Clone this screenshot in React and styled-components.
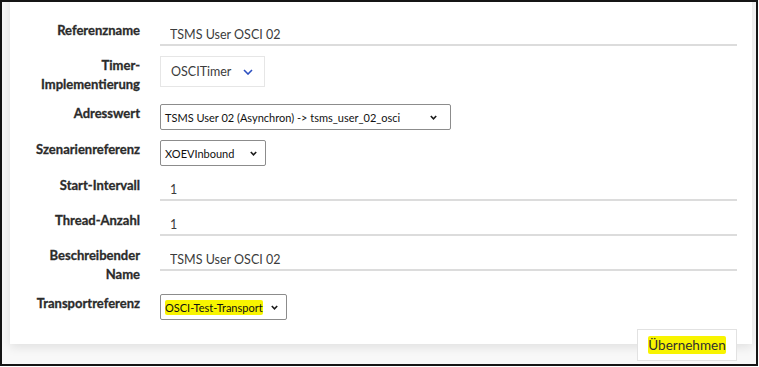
import React from 'react';
import styled, {createGlobalStyle} from 'styled-components';

const GlobalStyle = createGlobalStyle`
    body {
        margin: 0;
        background: #fff;
        font-family: Lato, "Open Sans", sans-serif;
    }
`;

const Frame = styled.div`
    width: 758px;
    height: 366px;
    box-sizing: border-box;
    border: 2px solid #151515;
    background: #f8f8f8;
    overflow: hidden;
`;

const Card = styled.div`
    margin: -20px 4px 0 8px;
    padding: 39px 15px 24px 0;
    background: #fff;
    box-shadow: 0 3px 10px rgba(0, 0, 0, 0.1);
`;

const Form = styled.div`
    display: grid;
    grid-template-columns: 130px 1fr;
    column-gap: 20px;
    row-gap: 10px;
    align-items: start;
`;

const Label = styled.label`
    text-align: right;
    font-weight: 700;
    font-size: 13px;
    line-height: 19px;
    color: #2b2b2b;
    -webkit-text-stroke: 0.3px #2b2b2b;
`;

const TextInput = styled.input`
    display: block;
    width: 100%;
    height: 25px;
    box-sizing: border-box;
    padding: 3px 10px 0;
    border: none;
    border-bottom: 2px solid #dcdcdc;
    background: transparent;
    font-family: Lato, sans-serif;
    font-size: 12.5px;
    color: #3c3c3c;
    outline: none;
`;

const Dropdown = styled.div`
    display: inline-flex;
    align-items: center;
    gap: 12px;
    height: 31px;
    box-sizing: border-box;
    padding: 0 11px 0 10px;
    border: 1px solid #e6e6e6;
    background: #fff;
    font-size: 12.5px;
    color: #3c3c3c;
`;

const SelectBox = styled.div`
    display: flex;
    align-items: center;
    justify-content: space-between;
    width: ${p => p.$width}px;
    height: 26px;
    box-sizing: border-box;
    padding: 0 ${p => p.$arrowGap}px 0 4px;
    border: 1px solid #8c8c8c;
    border-radius: 2px;
    background: #fff;
    font-size: 11px;
    color: #111;
`;

const Marker = styled.span`
    background: #f8f400;
    border-radius: 2px;
    padding: 1px 0;
`;

const Footer = styled.div`
    display: flex;
    justify-content: flex-end;
    margin-top: -15px;
    padding-right: 19px;
`;

const Button = styled.button`
    width: 100px;
    height: 32px;
    border: 1px solid #e2e2e2;
    background: #fff;
    font-family: Lato, sans-serif;
    font-size: 13.5px;
    color: #2f2f2f;
    padding: 0;
`;

const BlueChevron = () => (
    <svg width="10" height="6" viewBox="0 0 10 6">
        <polyline points="1,1 5,5 9,1" fill="none" stroke="#2c4fc0" strokeWidth="1.6"/>
    </svg>
);

const SmallChevron = () => (
    <svg width="7" height="5" viewBox="0 0 7 5">
        <polyline points="0.8,1 3.5,3.8 6.2,1" fill="none" stroke="#1a1a1a" strokeWidth="1.6"/>
    </svg>
);

const Select = ({width, arrowGap = 12, children}) => (
    <SelectBox $width={width} $arrowGap={arrowGap} role="combobox">
        <span>{children}</span>
        <SmallChevron/>
    </SelectBox>
);

export default function App() {
    return (
        <>
            <GlobalStyle/>
            <Frame>
                <Card>
                    <Form>
                        <Label>Referenzname</Label>
                        <TextInput defaultValue="TSMS User OSCI 02"/>

                        <Label>Timer-<br/>Implementierung</Label>
                        <div>
                            <Dropdown>
                                <span>OSCITimer</span>
                                <BlueChevron/>
                            </Dropdown>
                        </div>

                        <Label>Adresswert</Label>
                        <Select width={291} arrowGap={13}>
                            TSMS User 02 (Asynchron) -&gt; tsms_user_02_osci
                        </Select>

                        <Label>Szenarienreferenz</Label>
                        <Select width={106} arrowGap={8}>XOEVInbound</Select>

                        <Label>Start-Intervall</Label>
                        <TextInput defaultValue="1"/>

                        <Label>Thread-Anzahl</Label>
                        <TextInput defaultValue="1"/>

                        <Label>Beschreibender<br/>Name</Label>
                        <TextInput defaultValue="TSMS User OSCI 02"/>

                        <Label>Transportreferenz</Label>
                        <Select width={127} arrowGap={8}>
                            <Marker>OSCI-Test-Transport</Marker>
                        </Select>
                    </Form>
                </Card>
                <Footer>
                    <Button><Marker>Übernehmen</Marker></Button>
                </Footer>
            </Frame>
        </>
    );
}
